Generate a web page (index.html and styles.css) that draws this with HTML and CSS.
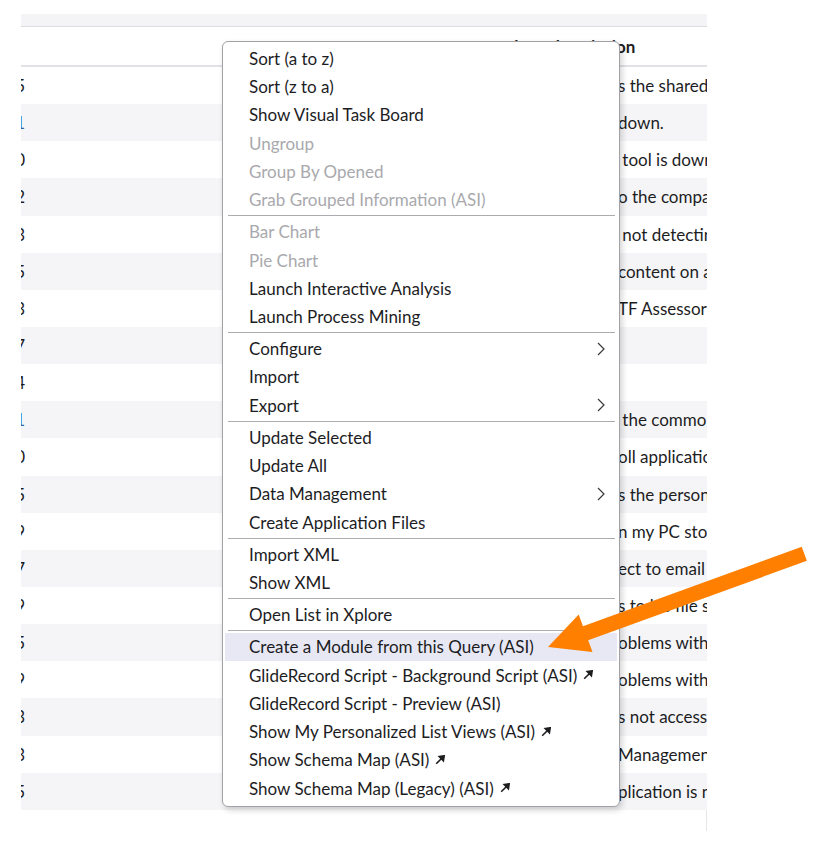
FILE: index.html
```html
<!DOCTYPE html>
<html lang="en">
  <head>
    <meta charset="UTF-8" />
    <meta name="viewport" content="width=device-width, initial-scale=1.0" />
    <title>Incidents</title>
    <link rel="stylesheet" href="styles.css">
  </head>
  <body>
    <div class="list">
      <div class="list-bar"></div>
      <div class="list-head">
        <div class="num"></div>
        <div class="col-mid"></div>
        <div class="col-head">Short description</div>
      </div>
      <div class="list-body">
        <div class="row"><div class="num">INC0010015</div><div class="col-mid"></div><div class="lead">Unable to acces</div><div class="rest">s the shared drive</div></div>
        <div class="row"><div class="num link">INC0010011</div><div class="col-mid"></div><div class="lead">The email server is</div><div class="rest">down.</div></div>
        <div class="row"><div class="num">INC0010010</div><div class="col-mid"></div><div class="lead">The reporting</div><div class="rest"> tool is down</div></div>
        <div class="row"><div class="num">INC0010012</div><div class="col-mid"></div><div class="lead">Unable to connect t</div><div class="rest">o the company VPN</div></div>
        <div class="row"><div class="num">INC0010013</div><div class="col-mid"></div><div class="lead">Printer is</div><div class="rest"> not detecting paper</div></div>
        <div class="row"><div class="num">INC0010005</div><div class="col-mid"></div><div class="lead">Cannot view</div><div class="rest">content on a website</div></div>
        <div class="row"><div class="num">INC0010003</div><div class="col-mid"></div><div class="lead">Issue with the</div><div class="rest">TF Assessor tool</div></div>
        <div class="row"><div class="num">INC0010007</div><div class="col-mid"></div><div class="lead"></div><div class="rest"></div></div>
        <div class="row"><div class="num">INC0010004</div><div class="col-mid"></div><div class="lead"></div><div class="rest"></div></div>
        <div class="row"><div class="num link">INC0010001</div><div class="col-mid"></div><div class="lead">Cannot access</div><div class="rest"> the common folder</div></div>
        <div class="row"><div class="num">INC0010000</div><div class="col-mid"></div><div class="lead">Cannot open payr</div><div class="rest">oll application</div></div>
        <div class="row"><div class="num">INC0009995</div><div class="col-mid"></div><div class="lead">Please advise who i</div><div class="rest">s the person responsible</div></div>
        <div class="row"><div class="num">INC0009999</div><div class="col-mid"></div><div class="lead">The monitor o</div><div class="rest">n my PC stopped working</div></div>
        <div class="row"><div class="num">INC0009997</div><div class="col-mid"></div><div class="lead">Unable to conn</div><div class="rest">ect to email</div></div>
        <div class="row"><div class="num">INC0009989</div><div class="col-mid"></div><div class="lead">Need acces</div><div class="rest">s to his file share</div></div>
        <div class="row"><div class="num">INC0009985</div><div class="col-mid"></div><div class="lead">Having pr</div><div class="rest">oblems with printer</div></div>
        <div class="row"><div class="num">INC0009979</div><div class="col-mid"></div><div class="lead">Having pr</div><div class="rest">oblems with laptop</div></div>
        <div class="row"><div class="num">INC0009973</div><div class="col-mid"></div><div class="lead">Website i</div><div class="rest">s not accessible</div></div>
        <div class="row"><div class="num">INC0009963</div><div class="col-mid"></div><div class="lead">Issue with Asset</div><div class="rest">Management</div></div>
        <div class="row"><div class="num">INC0009955</div><div class="col-mid"></div><div class="lead">Payroll ap</div><div class="rest">plication is not loading</div></div>
      </div>
      <div class="list-foot"></div>
    </div>

    <div class="context-menu">
      <div class="item">Sort (a to z)</div>
      <div class="item">Sort (z to a)</div>
      <div class="item">Show Visual Task Board</div>
      <div class="item disabled">Ungroup</div>
      <div class="item disabled">Group By Opened</div>
      <div class="item disabled">Grab Grouped Information (ASI)</div>
      <div class="sep"></div>
      <div class="item disabled">Bar Chart</div>
      <div class="item disabled">Pie Chart</div>
      <div class="item">Launch Interactive Analysis</div>
      <div class="item">Launch Process Mining</div>
      <div class="sep"></div>
      <div class="item sub">Configure
        <svg class="chev" width="8" height="14" viewBox="0 0 8 14"><path d="M1 1 L7 7 L1 13" /></svg>
      </div>
      <div class="item">Import</div>
      <div class="item sub">Export
        <svg class="chev" width="8" height="14" viewBox="0 0 8 14"><path d="M1 1 L7 7 L1 13" /></svg>
      </div>
      <div class="sep"></div>
      <div class="item">Update Selected</div>
      <div class="item">Update All</div>
      <div class="item sub">Data Management
        <svg class="chev" width="8" height="14" viewBox="0 0 8 14"><path d="M1 1 L7 7 L1 13" /></svg>
      </div>
      <div class="item">Create Application Files</div>
      <div class="sep"></div>
      <div class="item">Import XML</div>
      <div class="item">Show XML</div>
      <div class="sep"></div>
      <div class="item">Open List in Xplore</div>
      <div class="sep"></div>
      <div class="item active">Create a Module from this Query (ASI)</div>
      <div class="item">GlideRecord Script - Background Script (ASI)
        <svg class="ext" width="10" height="10" viewBox="0 0 10 10"><path d="M1.2 8.8 L7 3" /><polygon points="9.2,0.8 4.2,1.6 8.4,5.8" /></svg>
      </div>
      <div class="item">GlideRecord Script - Preview (ASI)</div>
      <div class="item">Show My Personalized List Views (ASI)
        <svg class="ext" width="10" height="10" viewBox="0 0 10 10"><path d="M1.2 8.8 L7 3" /><polygon points="9.2,0.8 4.2,1.6 8.4,5.8" /></svg>
      </div>
      <div class="item">Show Schema Map (ASI)
        <svg class="ext" width="10" height="10" viewBox="0 0 10 10"><path d="M1.2 8.8 L7 3" /><polygon points="9.2,0.8 4.2,1.6 8.4,5.8" /></svg>
      </div>
      <div class="item">Show Schema Map (Legacy) (ASI)
        <svg class="ext" width="10" height="10" viewBox="0 0 10 10"><path d="M1.2 8.8 L7 3" /><polygon points="9.2,0.8 4.2,1.6 8.4,5.8" /></svg>
      </div>
    </div>

    <!-- annotation arrow drawn over the screenshot -->
    <svg class="callout" width="820" height="859" viewBox="0 0 820 859">
      <polygon points="548,647 578.7,614.4 583,626.2 801.7,546.8 806.9,560.8 588.2,640.2 592.5,652" />
    </svg>
  </body>
</html>
```

FILE: styles.css
```css
body {
  margin: 0;
  font-family: Lato, "Noto Sans", sans-serif;
  background-color: #fff;
  color: #1d1d1f;
}

.list {
  width: 686px;
  margin-left: 21px;
  padding-top: 14px;
  overflow: hidden;
}
.list-bar {
  height: 12px;
  background-color: #f4f4f6;
  border-bottom: 1px solid #dcdce1;
}
.list-head,
.row {
  display: flex;
  align-items: center;
  white-space: nowrap;
  font-size: 17px;
}
.list-head {
  height: 38px;
  border-bottom: 2px solid #e1e1e6;
  font-weight: bold;
}
.row {
  height: 37.15px;
}
.row:nth-child(even) {
  background-color: #f5f5f7;
}
.num {
  width: 4px;
  flex: none;
  overflow: hidden;
  direction: rtl;
  text-align: right;
}
.num.link {
  color: #2f65a8;
}
.col-mid {
  width: 476px;
  flex: none;
}
.col-head {
  padding-left: 4px;
}
.lead {
  width: 117px;
  flex: none;
  overflow: hidden;
  direction: rtl;
  text-align: right;
}
.rest {
  flex: 1;
  overflow: hidden;
  white-space: pre;
}
.list-foot {
  height: 21px;
  border-right: 1px solid #e6e6ea;
}

/* context menu */
.context-menu {
  position: absolute;
  left: 222px;
  top: 41px;
  width: 396px;
  padding: 2px 0 4px;
  background-color: #fff;
  border: 1px solid #a2a2a6;
  border-radius: 6px;
  box-shadow: 2px 3px 6px rgba(0, 0, 0, 0.18);
}
.item {
  display: flex;
  align-items: center;
  height: 28.3px;
  margin: 0 2px;
  padding: 0 12px 0 24px;
  font-size: 17px;
  color: #1d1d1f;
}
.item.disabled {
  color: #a9a9ad;
}
.item.active {
  background-color: #e8e8f5;
}
.chev {
  margin-left: auto;
  fill: none;
  stroke: #3a3a3e;
  stroke-width: 1.2;
}
.ext {
  margin-left: 6px;
  fill: #1d1d1f;
  stroke: #1d1d1f;
  stroke-width: 1.6;
}
.sep {
  height: 1px;
  margin: 1.4px 4px 1.4px 5px;
  background-color: #acacb0;
}

.callout {
  position: absolute;
  left: 0;
  top: 0;
  pointer-events: none;
  fill: #ff8000;
}
```
